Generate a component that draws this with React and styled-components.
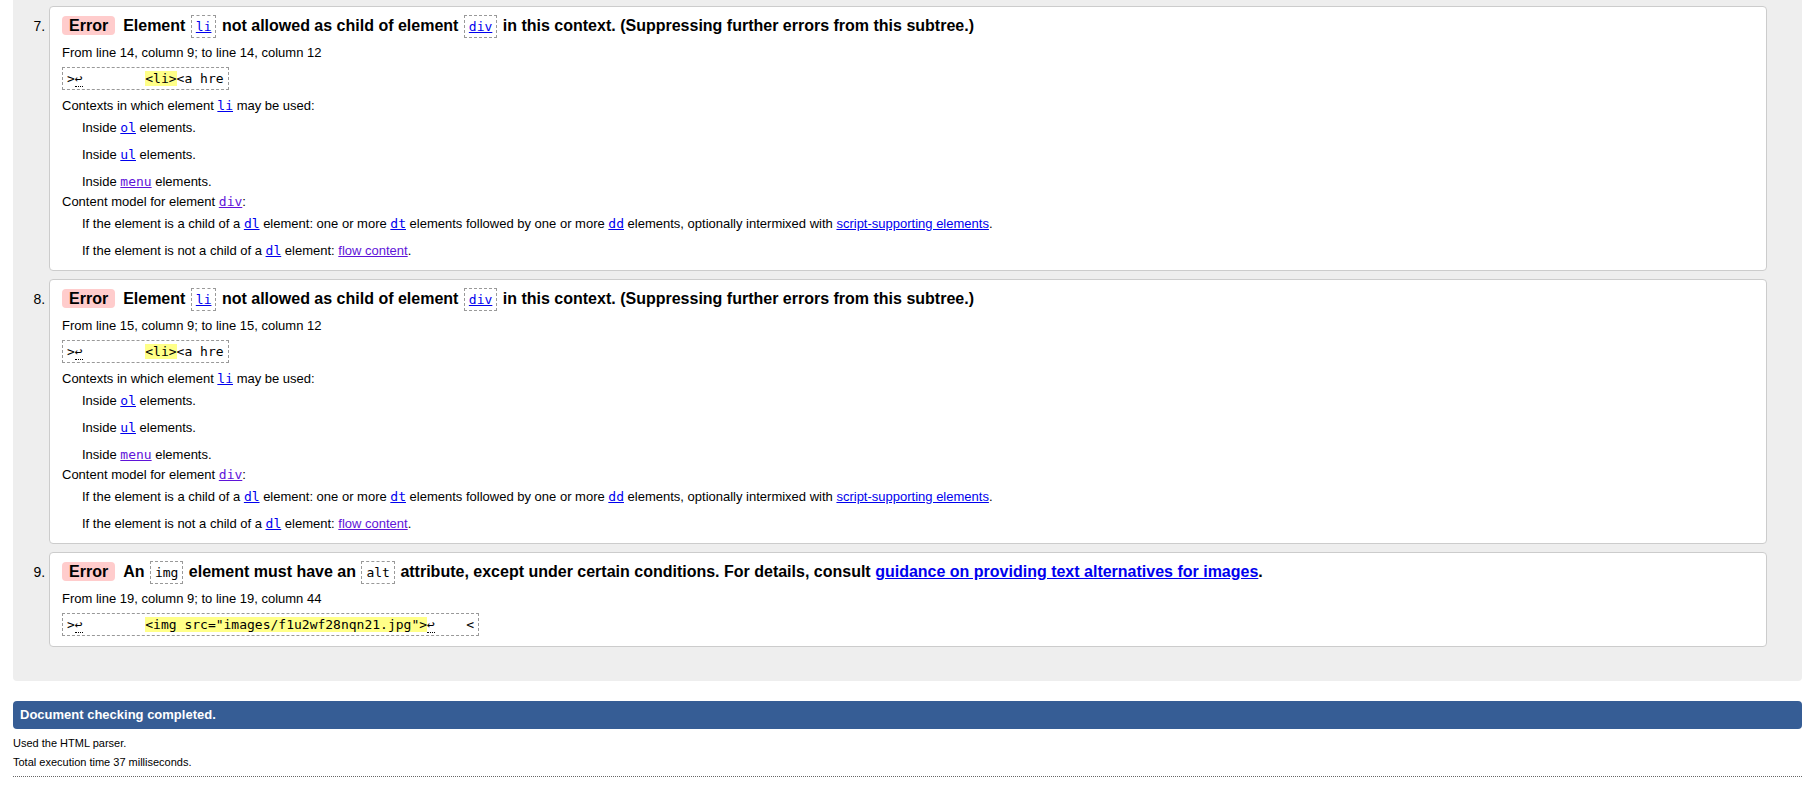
import React from 'react';
import styled, { createGlobalStyle } from 'styled-components';

const Global = createGlobalStyle`
  html, body { margin: 0; padding: 0; background: #fff; }
  body {
    font-family: "Liberation Sans", Arial, Helvetica, sans-serif;
    font-size: 13px;
    color: #000;
  }
`;

const Page = styled.div`
  margin: 0 17px 0 13px;
`;

const Results = styled.ol`
  margin: 0;
  padding: 6px 35px 34px 36px;
  background: #eee;
  border-radius: 0 0 4px 4px;
  list-style: decimal outside;
`;

const Card = styled.li`
  background: #fff;
  border: 1px solid #ccc;
  border-radius: 4px;
  padding: 8px 12px 7px 12px;
  & + & { margin-top: 8px; }
  &::marker { font-size: 14px; color: #000; }
`;

const Message = styled.p`
  margin: 0 0 7px;
  font-size: 16px;
  font-weight: bold;
  line-height: 22px;
`;

const Badge = styled.strong`
  background: #fcc;
  border-radius: 4px;
  padding: 1px 7px;
  margin-right: 8px;
  color: #000;
`;

const BoxCode = styled.code`
  font-family: "DejaVu Sans Mono", monospace;
  font-size: 13px;
  font-weight: normal;
  border: 1px dashed #999;
  padding: 3px 4px;
  margin: 0 1px;
`;

const A = styled.a`
  color: ${(p) => (p.$visited ? '#5f14d9' : '#0000ee')};
  text-decoration: underline;
  cursor: pointer;
`;

const CodeA = styled(A)`
  font-family: "DejaVu Sans Mono", monospace;
  font-size: 13px;
  font-weight: normal;
`;

const Location = styled.p`
  margin: 0 0 6px;
  line-height: 16px;
`;

const Extract = styled.p`
  margin: 0 0 3px;
  width: fit-content;
  border: 1px dashed #999;
  padding: 3px 4px;
  font-family: "DejaVu Sans Mono", monospace;
  font-size: 13px;
  line-height: 15px;
  white-space: pre;
`;

const Lf = styled.span`
  border-bottom: 1px dotted #000;
`;

const Mark = styled.b`
  font-weight: normal;
  background: #ff8;
`;

const Details = styled.dl`
  margin: 8px 0 0;
  line-height: 15px;
`;

const Term = styled.dt`
  margin: 0;
`;

const Def = styled.dd`
  margin: 0 0 0 20px;
  padding: 7px 0 5px;
`;

const Status = styled.p`
  margin: 20px 0 0;
  height: 28px;
  line-height: 28px;
  padding: 0 7px;
  background: #365d95;
  border-radius: 4px;
  color: #fff;
  font-weight: bold;
  font-size: 13px;
`;

const Note = styled.p`
  margin: ${(p) => (p.$first ? '7px' : '5px')} 0 0;
  font-size: 11px;
  line-height: 14px;
`;

const Rule = styled.hr`
  margin: 7px 0 0;
  border: 0;
  border-top: 1px dotted #666;
  height: 0;
`;

const LiError = ({ line }) => (
  <Card value={line === 14 ? 7 : 8}>
    <Message>
      <Badge>Error</Badge>Element <BoxCode><A>li</A></BoxCode> not allowed as child of element{' '}
      <BoxCode><A>div</A></BoxCode> in this context. (Suppressing further errors from this subtree.)
    </Message>
    <Location>From line {line}, column 9; to line {line}, column 12</Location>
    <Extract>
      {'>'}<Lf>↩</Lf>{'        '}<Mark>{'<li>'}</Mark>{'<a hre'}
    </Extract>
    <Details>
      <Term>Contexts in which element <CodeA>li</CodeA> may be used:</Term>
      <Def>Inside <CodeA>ol</CodeA> elements.</Def>
      <Def>Inside <CodeA>ul</CodeA> elements.</Def>
      <Def>Inside <CodeA $visited>menu</CodeA> elements.</Def>
      <Term>Content model for element <CodeA $visited>div</CodeA>:</Term>
      <Def>
        If the element is a child of a <CodeA>dl</CodeA> element: one or more <CodeA>dt</CodeA> elements
        followed by one or more <CodeA>dd</CodeA> elements, optionally intermixed with{' '}
        <A>script-supporting elements</A>.
      </Def>
      <Def>
        If the element is not a child of a <CodeA>dl</CodeA> element: <A $visited>flow content</A>.
      </Def>
    </Details>
  </Card>
);

export default function App() {
  return (
    <Page>
      <Global />
      <Results start={7}>
        <LiError line={14} />
        <LiError line={15} />
        <Card value={9}>
          <Message>
            <Badge>Error</Badge>An <BoxCode>img</BoxCode> element must have an <BoxCode>alt</BoxCode>{' '}
            attribute, except under certain conditions. For details, consult{' '}
            <A>guidance on providing text alternatives for images</A>.
          </Message>
          <Location>From line 19, column 9; to line 19, column 44</Location>
          <Extract>
            {'>'}<Lf>↩</Lf>{'        '}<Mark>{'<img src="images/f1u2wf28nqn21.jpg">'}</Mark><Lf>↩</Lf>{'    <'}
          </Extract>
        </Card>
      </Results>
      <Status>Document checking completed.</Status>
      <Note $first>Used the HTML parser.</Note>
      <Note>Total execution time 37 milliseconds.</Note>
      <Rule />
    </Page>
  );
}
